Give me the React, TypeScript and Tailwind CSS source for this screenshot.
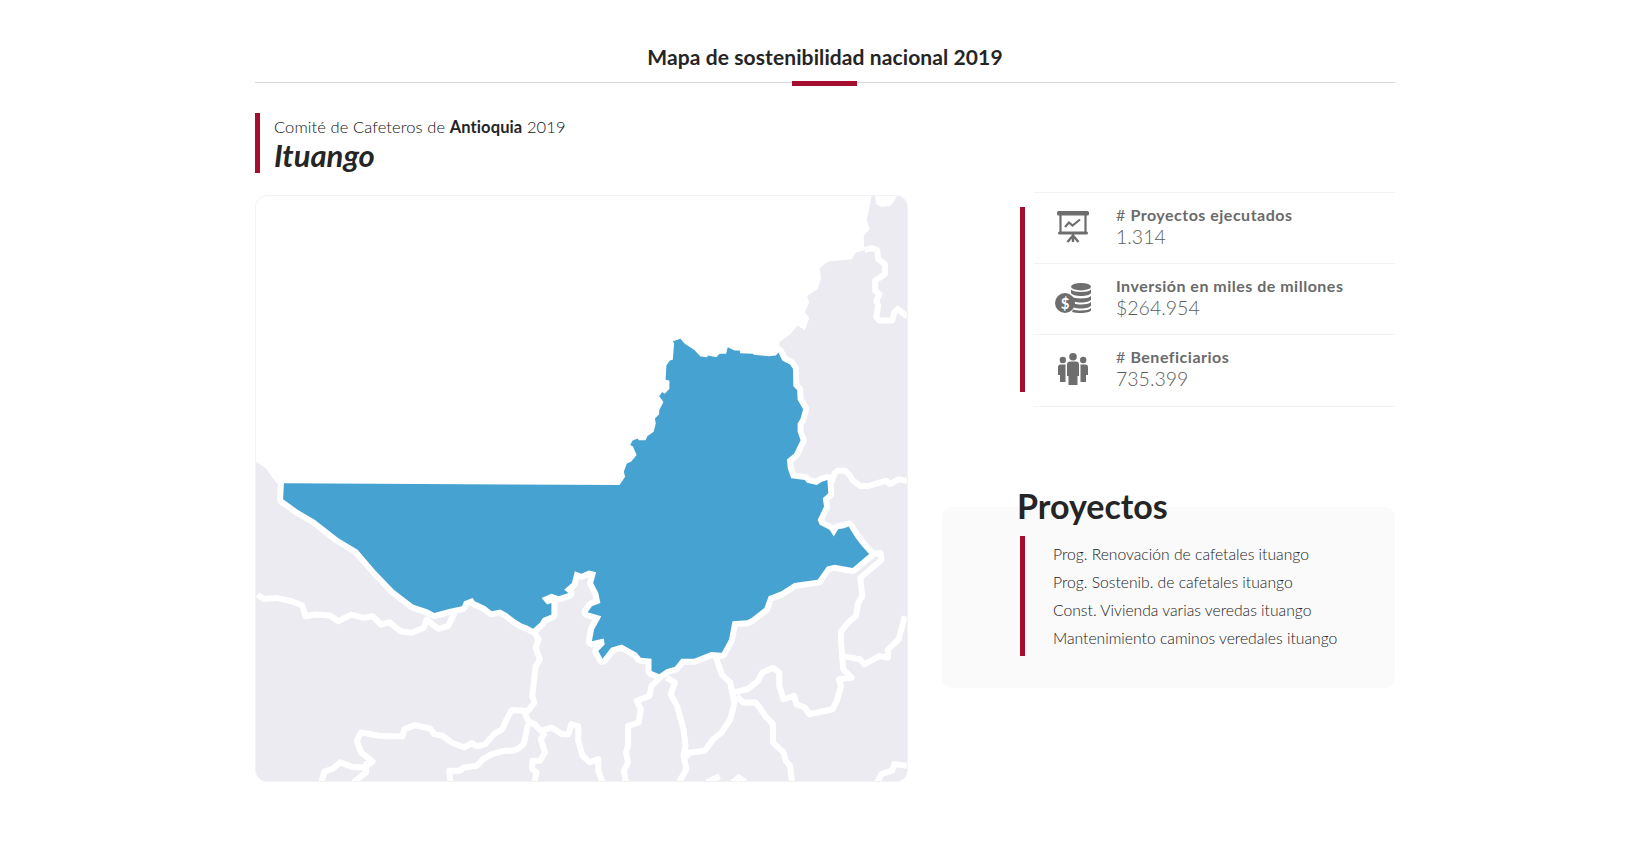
const borders = [
  "15,375 30,388 60,385 95,395 120,408 128,440 150,435 185,438 205,455 235,435 265,445 285,440 305,465 325,458 350,485 378,490 405,475 412,450 440,478 462,470 478,430",
  "430,440 470,425",
  "660,480 675,510 668,535 678,570 668,590 665,625 660,680 665,700 650,725 612,722 598,755 590,780 570,795 550,825 530,832 518,822 500,835 470,820 450,800 430,795 420,778 385,768 360,780 355,802 300,800 258,790 248,815 258,850 285,878 265,895 240,895 210,880 190,900 172,908 165,940",
  "285,878 270,885 270,910 240,940",
  "640,725 650,755 665,765 680,785 705,775 730,795 745,795 752,765 768,772 768,815 778,860 795,880 815,870 815,905 825,940",
  "650,765 640,825 625,840 615,845 595,845 565,855 545,870 530,890 500,895 490,905 465,905 468,940",
  "690,790 680,810 690,850 678,875 660,875 660,900 670,910 665,940",
  "960,625 940,650 935,680 905,695 915,720 910,760 885,770 885,830 880,850 885,880 875,905 880,940",
  "975,625 995,640 985,675 1000,710 1015,780 1020,830 1015,860 1022,900 1005,940",
  "1090,560 1105,615 1125,640 1130,675 1135,700 1125,750 1105,790 1085,810 1065,845 1030,850 1015,870",
  "1130,670 1165,660 1190,635 1200,610 1225,595 1240,610 1240,650 1250,690 1275,680 1280,705 1300,715 1310,735 1365,720 1375,695 1385,650 1380,630 1410,625 1390,600 1385,520 1385,485 1405,455 1420,440 1425,400 1435,380 1430,325 1480,270 1478,250 1451,253",
  "1140,680 1155,700 1185,700 1210,745 1225,765 1225,820 1250,850 1255,875 1265,890 1270,940",
  "1390,560 1430,570 1440,585 1475,560 1495,565 1495,540 1520,510 1535,440",
  "1470,940 1480,915 1505,905 1510,885 1540,890",
  "1070,940 1100,922",
  "1130,940 1145,925 1160,940",
  "1355,60 1370,10 1378,2 1395,2 1405,15 1412,30 1430,48 1450,48 1490,32 1500,42 1520,28 1540,32",
  "1440,-662 1458,-668 1470,-662 1472,-635 1488,-620 1488,-590 1465,-570 1465,-540 1475,-530 1468,-510 1472,-495 1468,-460 1475,-450 1505,-450 1510,-475 1518,-485 1540,-462",
];

const seaPoints =
  "0,-850 1460,-850 1450,-780 1445,-755 1452,-725 1438,-705 1440,-662 1420,-655 1410,-635 1355,-628 1335,-608 1338,-575 1330,-545 1305,-525 1310,-505 1300,-475 1310,-458 1300,-420 1283,-435 1265,-408 1240,-385 1240,-378 1250,-340 1100,0 865,46 77,42 60,40 35,-5 15,-22 0,-30";

const topBlobPoints = "1462,-850 1468,-800 1480,-792 1500,-795 1510,-810 1525,-850";

const bluePoints =
  "77,40 865,45 878,20 875,5 882,-20 892,-25 905,-45 896,-72 890,-75 895,-88 907,-95 910,-90 926,-90 930,-102 945,-115 950,-140 948,-155 958,-168 958,-180 968,-205 958,-222 965,-235 971,-230 982,-245 982,-270 973,-272 975,-315 983,-330 990,-332 993,-382 990,-388 1008,-395 1018,-380 1040,-362 1055,-342 1070,-340 1073,-345 1092,-340 1100,-350 1115,-350 1119,-370 1135,-360 1147,-360 1148,-352 1178,-350 1180,-347 1215,-343 1232,-345 1238,-354 1247,-330 1265,-318 1272,-305 1273,-252 1282,-240 1283,-212 1296,-183 1290,-155 1283,-140 1283,-115 1290,-90 1275,-50 1258,-32 1260,-5 1268,25 1300,30 1305,38 1328,45 1340,35 1353,30 1355,70 1342,85 1345,110 1330,150 1335,165 1358,180 1368,200 1378,178 1392,175 1403,170 1410,185 1420,205 1435,230 1451,253 1430,275 1412,295 1370,285 1352,290 1330,330 1275,340 1245,365 1215,380 1205,415 1175,445 1165,452 1130,455 1122,510 1105,550 1080,548 1040,568 1010,568 995,592 975,600 958,615 940,605 940,568 915,565 905,550 870,525 845,535 825,568 815,545 830,525 828,507 800,515 805,480 818,450 822,440 790,428 800,410 820,400 815,370 803,340 810,308 793,302 775,312 760,305 753,340 735,360 745,370 722,380 705,372 682,385 695,405 705,400 705,435 685,445 678,460 662,478 648,468 635,462 620,450 600,430 585,420 565,425 550,410 525,395 520,385 500,395 495,410 465,418 430,430 415,420 380,405 335,360 290,300 250,240 205,205 150,150 110,120 75,88";

const MapPanel = () => (
  <div className="w-[653px] h-[587px] rounded-[12px] overflow-hidden border border-[#f3f3f5] bg-[#ecebf1] shrink-0">
    <svg viewBox="255 195 653 587" className="w-full h-full block">
      <g transform="translate(250 470) scale(0.4274 0.3333)" strokeLinejoin="round">
        <polygon points={seaPoints} fill="#ffffff" />
        <polygon points={topBlobPoints} fill="#ffffff" />
        {borders.map((p, i) => (
          <polyline key={i} points={p} fill="none" stroke="#ffffff" strokeWidth="6" vectorEffect="non-scaling-stroke" />
        ))}
        <polygon points={bluePoints} fill="#46a3d1" stroke="#ffffff" strokeWidth="12" paintOrder="stroke" vectorEffect="non-scaling-stroke" />
      </g>
    </svg>
  </div>
);

const BoardIcon = () => (
  <svg width="32" height="32" viewBox="0 0 32 32" fill="none" stroke="#6e6e6e">
    <rect x="0" y="0" width="32" height="4.500" rx="1.500" fill="#6e6e6e" stroke="none" />
    <path d="M3.500 4v17M28.500 4v17" strokeWidth="2.200" />
    <rect x="1" y="20.500" width="30" height="3" rx="1.500" fill="#6e6e6e" stroke="none" />
    <path d="M8 16l4-4.500 3.500 3 7.500-6" strokeWidth="2.200" />
    <path d="M16 23v8M16 24.500l-5.500 6.500M16 24.500l5.500 6.500" strokeWidth="2.400" />
  </svg>
);

const CoinsIcon = () => (
  <svg width="36" height="30" viewBox="0 0 36 30" fill="#6e6e6e">
    <ellipse cx="26" cy="3.700" rx="10" ry="3.700" />
    <path d="M16 6.500c2 1.800 5.500 2.500 10 2.500s8-.7 10-2.500v3.500c-1 2-5 3-10 3s-9-1-10-3z" />
    <path d="M16 13c2 1.800 5.500 2.500 10 2.500s8-.7 10-2.500v3.500c-1 2-5 3-10 3s-9-1-10-3z" />
    <path d="M19 20.500c2 .7 4.500 1 7 1 4.500 0 8-.7 10-2.500v3.500c-1 2-5 3-10 3-2.500 0-5-.3-7-1z" />
    <path d="M18 26.500c2.500.8 5 1 8 1 4.500 0 8-.7 10-2.500v2.500c-1 1.500-5 2.500-10 2.500-3.500 0-6-.3-9-1z" />
    <circle cx="10" cy="20" r="10" />
    <text x="10" y="25.500" textAnchor="middle" fontSize="15" fontWeight="700" fill="#ffffff" fontFamily="Lato, sans-serif">$</text>
  </svg>
);

const PeopleIcon = () => (
  <svg width="30" height="32" viewBox="0 0 30 32" fill="#6e6e6e">
    <circle cx="15" cy="3.800" r="3.800" />
    <circle cx="4.800" cy="7" r="3.200" />
    <circle cx="25.200" cy="7" r="3.200" />
    <path d="M9 11.500c0-2 1.500-3 3-3h6c1.500 0 3 1 3 3V23h-1.500v9h-9v-9H9z" />
    <path d="M7.500 11.500H2.500C1 11.500 0 12.500 0 14v8h2v7h5.500v-6H7.500z" />
    <path d="M22.500 11.500h5c1.500 0 2.500 1 2.500 2.500v8h-2v7h-5.500v-6z" />
  </svg>
);

const stats = [
  { label: "Proyectos ejecutados", prefix: "# ", value: "1.314", icon: <BoardIcon /> },
  { label: "Inversión en miles de millones", prefix: "", value: "$264.954", icon: <CoinsIcon /> },
  { label: "Beneficiarios", prefix: "# ", value: "735.399", icon: <PeopleIcon /> },
];

const projects = [
  "Prog. Renovación de cafetales ituango",
  "Prog. Sostenib. de cafetales ituango",
  "Const. Vivienda varias veredas ituango",
  "Mantenimiento caminos veredales ituango",
];

export default function App() {
  return (
    <div className="min-h-[866px] bg-white font-['Lato',sans-serif] text-[#252525]">
      <div className="w-[1140px] mx-auto pt-[45px]">
        <div className="relative border-b border-[#d8d8d8] h-[38px] text-center">
          <h1 className="text-[21px] leading-[24px] font-bold tracking-[0.1px]">Mapa de sostenibilidad nacional 2019</h1>
          <div className="absolute left-[537px] bottom-[-4px] w-[65px] h-[5px] bg-[#a60e2f]" />
        </div>

        <div className="mt-[30px] h-[60px] border-l-[5px] border-[#a60e2f] pl-[14px]">
          <p className="text-[16.500px] leading-[28px] font-light text-[#111111] tracking-[0.100px]">
            Comité de Cafeteros de <span className="font-bold text-[#252525]">Antioquia</span> 2019
          </p>
          <h2 className="text-[31px] leading-[32px] font-bold italic -mt-[2px]">Ituango</h2>
        </div>

        <div className="flex gap-[34px] mt-[22px]">
          <MapPanel />
          <div className="flex-1 flex flex-col -mt-[3px]">
            <div className="flex items-center ml-[78px] gap-[9px]">
              <div className="w-[5px] h-[185px] bg-[#a60e2f] shrink-0" />
              <div className="flex-1 border-t border-[#f3f3f3]">
                {stats.map((s) => (
                  <div key={s.label} className="flex items-center h-[71.200px] border-b border-[#f3f3f3] text-[#6a6a6a]">
                    <div className="w-[82px] pr-[4px] -mt-[3px] flex justify-center">{s.icon}</div>
                    <div className="mb-[3px]">
                      <p className="text-[16px] leading-[20px] font-bold tracking-[0.500px]">
                        {s.prefix && <span className="font-normal">{s.prefix}</span>}
                        {s.label}
                      </p>
                      <p className="text-[19.500px] leading-[24px] font-light text-[#5c5c5c]">{s.value}</p>
                    </div>
                  </div>
                ))}
              </div>
            </div>

            <h3 className="relative ml-[75px] mt-[79px] text-[34px] leading-[40px] font-bold">Proyectos</h3>
            <div className="-mt-[19px] h-[181px] rounded-[10px] bg-[#fafafa] pt-[29px] pl-[78px]">
              <div className="flex gap-[28px] h-[120px]">
                <div className="w-[5px] bg-[#a60e2f]" />
                <ul className="text-[15.700px] leading-[28px] font-light text-[#222222] pt-[4px]">
                  {projects.map((p) => (
                    <li key={p}>{p}</li>
                  ))}
                </ul>
              </div>
            </div>
          </div>
        </div>
      </div>
    </div>
  );
}
